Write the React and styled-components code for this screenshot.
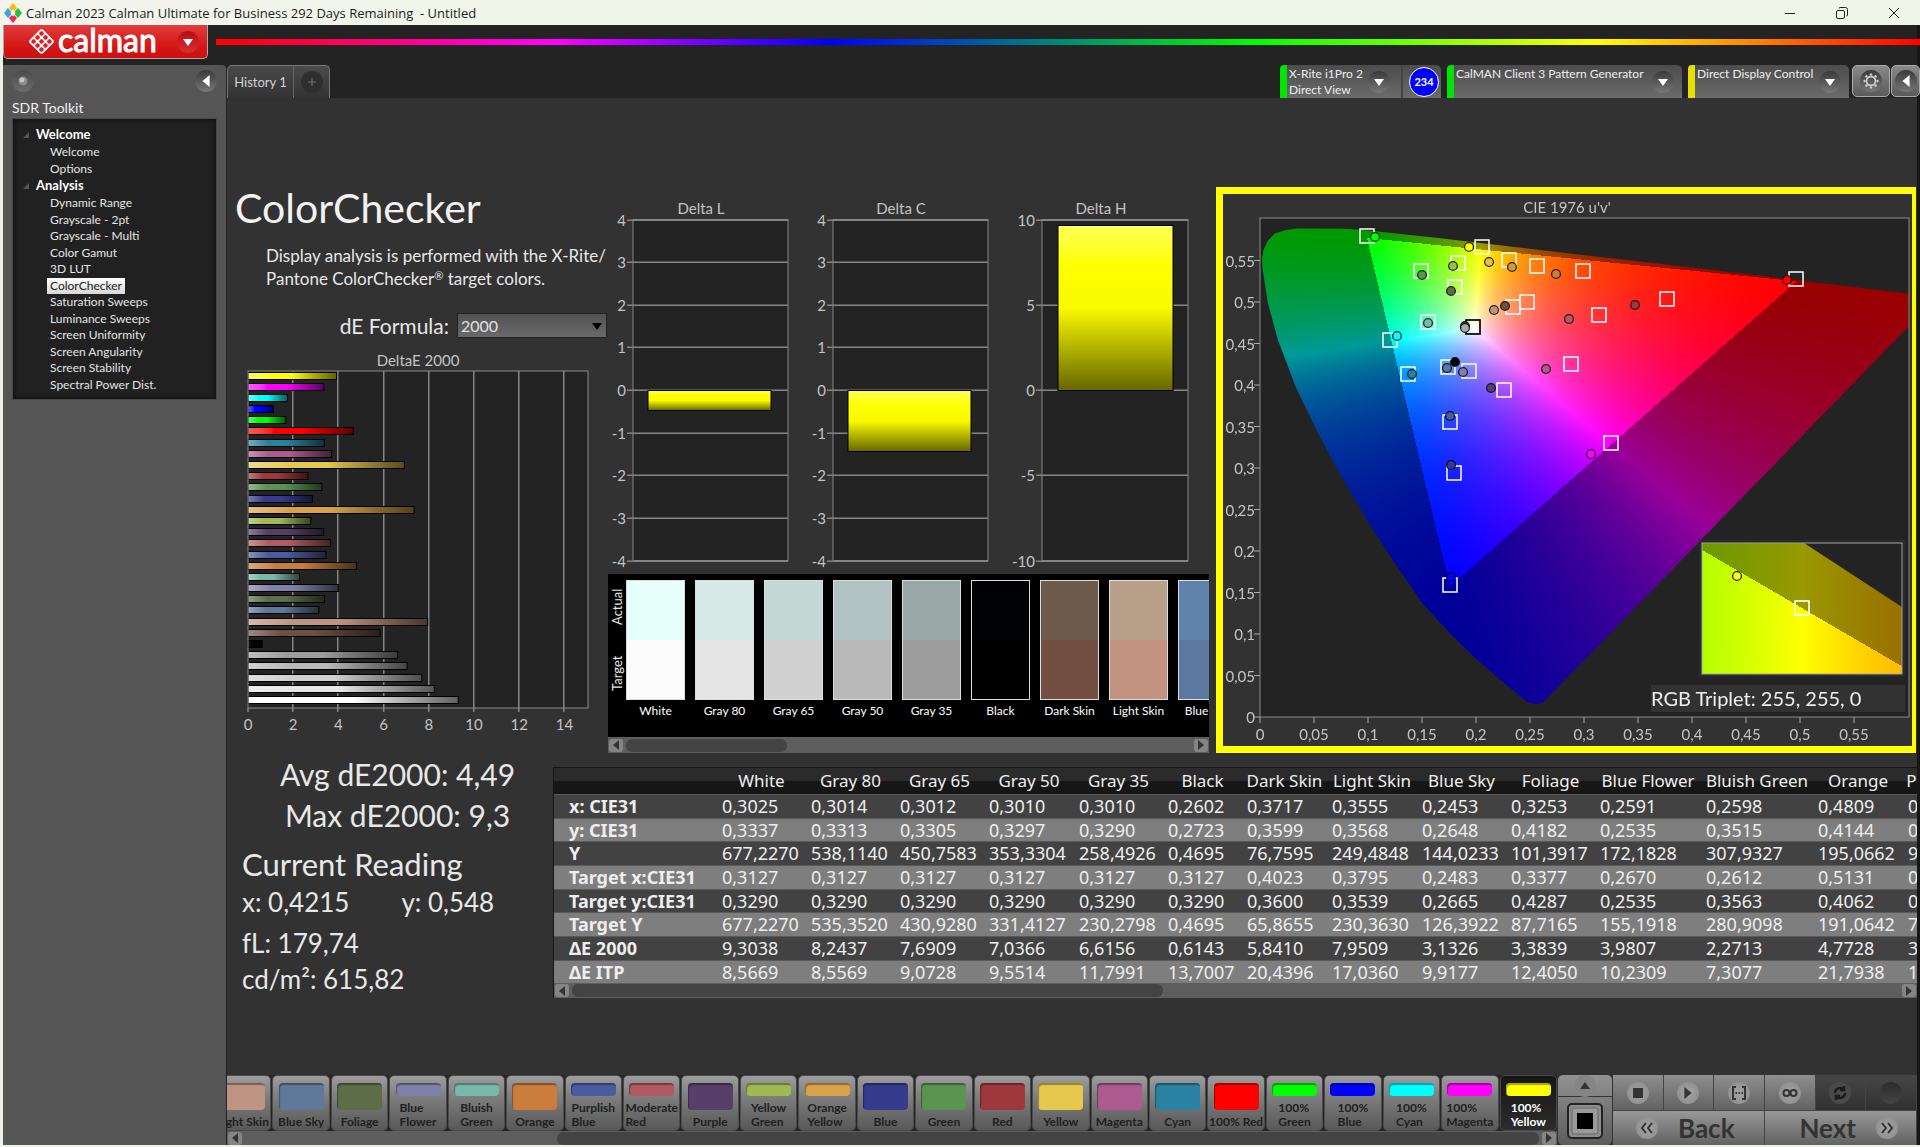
import React, { useLayoutEffect, useRef } from "react";
import styled, { createGlobalStyle, css } from "styled-components";

const Global = createGlobalStyle`
  *, *::before, *::after { box-sizing: border-box; }
  body { margin: 0; background: #eef0ea; font-family: Lato, "Open Sans", sans-serif; color: #e8e8e8; }
  button, select { font-family: inherit; color: inherit; margin: 0; }
  button { padding: 0; border: 0; background: none; }
`;

/* ---------- shell ---------- */

const Window = styled.div`
  display: flex;
  flex-direction: column;
  min-height: 100vh;
  overflow: hidden;
`;

const TitleBar = styled.header`
  display: flex;
  align-items: center;
  height: 25px;
  padding-left: 4px;
  background: linear-gradient(90deg, #f3f4ec, #edf6e6 60%, #f0f5ea);
  color: #1c1c1c;
  font: 13px/20px "Open Sans", "Noto Sans", sans-serif;
  white-space: pre;
  gap: 4px;
`;

const WindowButtons = styled.div`
  display: flex;
  margin-left: auto;
`;

const WindowButton = styled.button`
  display: grid;
  place-items: center;
  width: 52px;
  height: 25px;
`;

const Frame = styled.div`
  display: flex;
  flex-direction: column;
  flex: 1;
  margin: 0 0 2px 3px;
  border-right: 3px solid #161616;
  background: #232323;
`;

const BrandBar = styled.div`
  display: flex;
  height: 40px;
  gap: 8px;
`;

const BrandButton = styled.button`
  display: flex;
  align-items: center;
  width: 205px;
  height: 34px;
  padding: 0 8px 0 24px;
  gap: 3px;
  border: 1px solid #a9a9a9;
  border-width: 0 1px 1px 1px;
  border-radius: 0 0 5px 5px;
  background: linear-gradient(#e23c3c, #d41414 70%, #d01010);
  color: #fff;
`;

const BrandName = styled.span`
  flex: 1;
  text-align: left;
  font: 400 32px/32px Lato, sans-serif;
  -webkit-text-stroke: 1px #fff;
  padding-bottom: 4px;
`;

const Spectrum = styled.div`
  flex: 1;
  height: 6px;
  margin: 14px -3px 0 0;
  background: linear-gradient(90deg, #f00 0%, #f0f 20%, #00f 36%, #0f0 61%, #ff0 81%, #f00 100%);
`;

const Body = styled.div`
  display: flex;
  flex: 1;
  gap: 1px;
`;

/* ---------- round glyph button ---------- */

const Knob = styled.span`
  display: grid;
  place-items: center;
  flex: none;
  width: 22px;
  height: 22px;
  border-radius: 50%;
  background: ${(p) => p.$fill || "linear-gradient(#3a3a3a, #777)"};
`;

/* ---------- sidebar ---------- */

const Sidebar = styled.aside`
  width: 223px;
  padding: 0 9px;
  border-radius: 0 4px 0 0;
  background: #555;
`;

const SidebarTop = styled.div`
  display: flex;
  justify-content: space-between;
  align-items: center;
  height: 32px;
`;

const KnobButton = styled.button`
  display: block;
`;

const ToolkitName = styled.h2`
  margin: 0;
  font: 400 14px/21px Lato, sans-serif;
  color: #f0f0f0;
`;

const Tree = styled.nav`
  height: 282px;
  padding: 7px 0 0 10px;
  background: #212121;
  box-shadow: inset 0 0 6px #0c0c0c;
  border: 1px solid #484848;
`;

const TreeGroup = styled.h3`
  display: flex;
  align-items: center;
  gap: 7px;
  margin: 0;
  font: 700 13px/17px Lato, sans-serif;
  color: #fff;
`;

const TreeList = styled.ul`
  display: grid;
  grid-auto-rows: minmax(0, 1fr);
  height: ${(p) => p.$height}px;
  margin: 0;
  padding: 1px 0 0 24px;
  list-style: none;
  font-size: 12px;
  line-height: 16px;
`;

const TreeLink = styled.a`
  display: inline-block;
  padding: 0 3px;
  text-decoration: none;
  color: #e4e4e4;
  ${(p) => p.$active && css`
    background: linear-gradient(#fff, #d8d8d8);
    color: #222;
  `}
`;

/* ---------- tabs above the workspace ---------- */

const Main = styled.main`
  display: flex;
  flex-direction: column;
  flex: 1;
  min-width: 0;
`;

const TabBar = styled.div`
  display: flex;
  align-items: flex-start;
  height: 33px;
  margin-right: -3px;
`;

const HistoryTabs = styled.div`
  display: flex;
  height: 33px;
  border: 1px solid #777;
  border-bottom: 0;
  border-radius: 5px 5px 0 0;
  background: linear-gradient(#4a4a4a, #333);
  margin-right: auto;
`;

const HistoryTab = styled.button`
  width: 66px;
  border-right: 1px solid #666;
  font-size: 13px;
  color: #d2d2d2;
`;

const AddTab = styled.button`
  display: grid;
  place-items: center;
  width: 35px;
`;

const Device = styled.div`
  display: flex;
  width: ${(p) => p.$width}px;
  height: 33px;
  margin-right: ${(p) => p.$after}px;
  border-left: 7px solid ${(p) => p.$color};
  border-radius: 4px 5px 0 0;
  background: linear-gradient(#4c4c4c, #6b6b6b);
  color: #eee;
  font-size: 12px;
  line-height: 16px;
  white-space: nowrap;
`;

const DeviceName = styled.div`
  flex: 1;
  padding: 1px 0 0 2px;
`;

const DeviceMenu = styled.button`
  align-self: center;
  margin-right: ${(p) => p.$after}px;
`;

const Readout = styled.div`
  display: grid;
  place-items: center;
  width: 40px;
  padding-left: 4px;
  border-left: 2px solid #444;
`;

const Badge = styled.span`
  display: grid;
  place-items: center;
  width: 30px;
  height: 30px;
  border: 1px solid #fff;
  border-radius: 50%;
  background: #00f;
  font: 700 11px/14px Lato, sans-serif;
  color: #fff;
`;

const ToolButton = styled.button`
  display: grid;
  place-items: center;
  width: ${(p) => p.$width}px;
  height: 32px;
  margin-right: ${(p) => p.$after || 0}px;
  border: 1px solid #aaa;
  border-radius: 5px;
  background: linear-gradient(#8a8a8a, #5a5a5a);
`;

/* ---------- workspace ---------- */

const Workspace = styled.section`
  flex: 1;
  padding: 89px 0 0 0;
  background: #323232;
  overflow: hidden;
`;

const TopRow = styled.div`
  display: grid;
  grid-template-columns: 381px 601px minmax(0, 1fr);
  height: 566px;
`;

const Heading = styled.h1`
  margin: 0;
  padding-left: 8px;
  font: 400 41px/42px Lato, sans-serif;
  color: #f2f2f2;
`;

const Description = styled.p`
  margin: 15px 0 23px 39px;
  font-size: 17px;
  line-height: 23px;
  white-space: nowrap;
`;

const Registered = styled.span`
  font-size: 11px;
  line-height: 11px;
  vertical-align: 5px;
`;

const FormulaRow = styled.div`
  display: flex;
  justify-content: flex-end;
  align-items: center;
  gap: 8px;
  margin-bottom: 12px;
  padding-right: 1px;
`;

const FormulaLabel = styled.label`
  font-size: 21px;
  line-height: 25px;
`;

const SelectBox = styled.div`
  display: grid;
  align-items: center;
  > * { grid-area: 1 / 1; }
  > svg { justify-self: end; margin-right: 5px; pointer-events: none; }
`;

const FormulaSelect = styled.select`
  appearance: none;
  width: 150px;
  height: 25px;
  padding: 0 3px;
  border: 1px solid #222;
  border-radius: 0;
  background: linear-gradient(#525252, #6a6a6a);
  font-size: 16px;
  color: #e0e0e0;
`;

const BarChart = styled.svg`
  display: block;
  margin-left: 13px;
  overflow: visible;
  font: 15px Lato, sans-serif;
  fill: #c4c4c4;
`;

const DeltaRow = styled.div`
  display: flex;
  height: 387px;
  margin-left: -7px;
`;

const DeltaChart = styled.svg`
  flex: none;
  font: 15px Lato, sans-serif;
  fill: #c4c4c4;
`;

/* ---------- patch comparison ---------- */

const Patches = styled.div`
  display: flex;
  background: #000;
  height: 163px;
  padding-top: 6px;
  overflow: hidden;
`;

const PatchAxis = styled.div`
  display: flex;
  flex: none;
  justify-content: space-between;
  width: 18px;
  height: 120px;
  padding: 9px 0;
  writing-mode: vertical-rl;
  transform: rotate(180deg);
  font-size: 13px;
  line-height: 18px;
`;

const Patch = styled.figure`
  flex: none;
  width: 59px;
  margin: 0 10px 0 0;
`;

const PatchColors = styled.div`
  height: 120px;
  border: 1px solid #ddd;
  background: linear-gradient(${(p) => p.$actual} 50%, ${(p) => p.$target} 50%);
`;

const PatchName = styled.figcaption`
  display: flex;
  justify-content: center;
  padding-top: 3px;
  font-size: 12px;
  line-height: 16px;
  white-space: nowrap;
  color: #fff;
`;

/* ---------- scroll bar ---------- */

const Track = styled.div`
  display: flex;
  align-items: center;
  height: ${(p) => p.$height}px;
  padding: 0 1px;
  gap: 3px;
  background: #5e5e5e;
`;

const ScrollButton = styled.button`
  display: grid;
  place-items: center;
  flex: none;
  width: 14px;
  height: 13px;
  border-radius: 3px;
  background: #858585;
`;

const ThumbLane = styled.div`
  flex: 1;
  padding-left: ${(p) => p.$offset};
`;

const Thumb = styled.div`
  width: ${(p) => p.$size};
  height: 13px;
  border-radius: 6px;
  background: #444;
`;

/* ---------- chromaticity ---------- */

const CiePanel = styled.div`
  margin: 0 1px 0 7px;
  border: 7px solid #ff0;
  border-right-width: 4px;
  display: grid;
  align-content: start;
  overflow: hidden;
  > * { grid-area: 1 / 1; width: 100%; }
`;

const GamutCanvas = styled.canvas`
  display: block;
  height: auto;
`;

const CieOverlay = styled.svg`
  display: block;
  font: 15px Lato, sans-serif;
  fill: #c4c4c4;
`;

/* ---------- readings and table ---------- */

const BottomRow = styled.div`
  display: grid;
  grid-template-columns: 326px minmax(0, 1fr);
  padding-top: 1px;
`;

const Readings = styled.div`
  padding-left: 15px;
  white-space: nowrap;
`;

const Stat = styled.div`
  text-align: center;
  font-size: 30px;
  line-height: 41px;
`;

const ReadingTitle = styled.h2`
  margin: 8px 0 0;
  font: 400 31px/40px Lato, sans-serif;
`;

const ReadingLine = styled.div`
  display: flex;
  gap: 52px;
  margin-bottom: ${(p) => p.$after || 0}px;
  font-size: 26px;
  line-height: 36px;
`;

const TableBox = styled.div`
  margin-top: 13px;
  border: 1px solid #161616;
  border-width: 1px 0 0 1px;
  overflow: hidden;
`;

const DataTable = styled.table`
  table-layout: fixed;
  width: 1461px;
  border-collapse: collapse;
  font: 18px/20px "Noto Sans", "Open Sans", sans-serif;
  color: #eee;
`;

const HeadRow = styled.tr`
  height: 26px;
  background: linear-gradient(#2b2b2b 50%, #161616 50%);
`;

const HeadCell = styled.th`
  padding: 0;
  font: 400 17px/20px "Noto Sans", "Open Sans", sans-serif;
  white-space: nowrap;
`;

const DataRow = styled.tr`
  height: 24px;
  background: #424242;
  &:nth-child(even) { background: #7e7e7e; }
  &:nth-child(3n + 2) { height: 23px; }
`;

const RowName = styled.th`
  padding: 0 0 0 15px;
  border-top: 1px solid #5a5a5a;
  text-align: left;
  font: 700 18px/20px "Noto Sans", "Open Sans", sans-serif;
`;

const Cell = styled.td`
  padding: 0 0 0 5px;
  border-top: 1px solid #5a5a5a;
`;

/* ---------- bottom toolbar ---------- */

const Footer = styled.footer`
  display: flex;
  height: 70px;
  background: #323232;
`;

const StripArea = styled.div`
  flex: 1;
  min-width: 0;
  overflow: hidden;
`;

const Strip = styled.div`
  display: grid;
  grid-template-columns: repeat(23, minmax(0, 1fr));
  height: 56px;
  margin: 0 -1px 0 -13px;
  background: #262626;
`;

const StripButton = styled.button`
  display: flex;
  flex-direction: column;
  align-items: center;
  margin-right: 1px;
  padding: 7px 0 1px;
  border: 1px solid #4a4a4a;
  border-radius: 5px;
  background: ${(p) => (p.$active ? "linear-gradient(#161616, #2c2c2c)" : "linear-gradient(#9c9c9c, #7d7d7d 40%, #585858)")};
  color: ${(p) => (p.$active ? "#fff" : "#202020")};
  overflow: hidden;
`;

const StripColor = styled.span`
  flex: 1;
  width: 45px;
  border-radius: 4px;
  background: ${(p) => p.$color};
  box-shadow: inset 1px 2px 1px rgba(0, 0, 0, 0.35);
`;

const StripLabel = styled.span`
  padding-top: 5px;
  text-align: left;
  font: 700 12px/14px Lato, sans-serif;
  white-space: pre;
`;

const LevelBox = styled.div`
  display: flex;
  flex-direction: column;
  width: 54px;
  margin: 0 1px;
  border-radius: 5px;
  background: linear-gradient(#929292, #5c5c5c);
`;

const LevelUp = styled.button`
  display: grid;
  place-items: center;
  height: 22px;
  border-bottom: 1px solid #333;
`;

const LevelStop = styled.button`
  display: grid;
  place-items: center;
  flex: 1;
`;

const Transport = styled.div`
  display: grid;
  grid-template-columns: repeat(6, 1fr);
  grid-template-rows: 35px 35px;
  width: 304px;
`;

const TransportButton = styled.button`
  display: grid;
  place-items: center;
  border-right: 1px solid #444;
  background: ${(p) => (p.$off ? "linear-gradient(#474747, #303030)" : "linear-gradient(#8e8e8e, #626262)")};
`;

const StepButton = styled.button`
  display: flex;
  align-items: center;
  justify-content: ${(p) => p.$align};
  gap: 20px;
  grid-column: span 3;
  padding: 0 18px 0 23px;
  border: 1px solid #444;
  border-width: 1px 1px 0 0;
  background: linear-gradient(#989898, #626262);
  font: 700 26px/30px Lato, sans-serif;
  color: #333;
`;

/* ---------- data ---------- */

const comma = (n) => String(Math.round(n * 100) / 100).replace(".", ",");

const DELTA_E = [
  ["#ffff00", 3.92], ["#ff00ff", 3.35], ["#00ffff", 1.75], ["#0000ff", 1.12], ["#00ff00", 1.67],
  ["#ff0000", 4.66], ["#2a82a2", 3.38], ["#ad5a90", 3.7], ["#e6c94c", 6.92], ["#9f383c", 2.65],
  ["#5b9451", 3.27], ["#363b8e", 2.85], ["#d9a248", 7.35], ["#a1b950", 2.78], ["#573f69", 3.35],
  ["#b25a63", 3.65], ["#4b5b9f", 3.45], ["#cb7d3e", 4.8], ["#7ab8a9", 2.28], ["#8180aa", 4],
  ["#5c6d47", 3.38], ["#60799b", 3.13], ["#bf9483", 7.95], ["#6e4f43", 5.84], ["#040404", 0.63],
  ["#9d9d9d", 6.62], ["#b9b9b9", 7.04], ["#d0d0d0", 7.69], ["#e6e6e6", 8.24], ["#ffffff", 9.3],
];

const PATCHES = [
  ["White", "#e7fffa", "#fbfbfb"], ["Gray 80", "#d6e9e6", "#e5e5e5"], ["Gray 65", "#c4d8d5", "#d0d0d0"],
  ["Gray 50", "#b0c2c1", "#b9b9b9"], ["Gray 35", "#99a8a6", "#9d9d9d"], ["Black", "#010203", "#000000"],
  ["Dark Skin", "#6e5a4a", "#734f41"], ["Light Skin", "#b79f8a", "#c29380"], ["Blue Sky", "#5f83aa", "#5b799f"],
];

const STRIP = [
  ["Light Skin", "#bf9483"], ["Blue Sky", "#60799b"], ["Foliage", "#5c6d47"], ["Blue\nFlower", "#8180aa"],
  ["Bluish\nGreen", "#7ab8a9"], ["Orange", "#cb7d3e"], ["Purplish\nBlue", "#4b5b9f"], ["Moderate\nRed", "#b25a63"],
  ["Purple", "#573f69"], ["Yellow\nGreen", "#a1b950"], ["Orange\nYellow", "#d9a248"], ["Blue", "#363b8e"],
  ["Green", "#5b9451"], ["Red", "#9f383c"], ["Yellow", "#e6c94c"], ["Magenta", "#ad5a90"], ["Cyan", "#2a82a2"],
  ["100% Red", "#ff0000"], ["100%\nGreen", "#00ff00"], ["100%\nBlue", "#0000ff"], ["100%\nCyan", "#00ffff"],
  ["100%\nMagenta", "#ff00ff"], ["100%\nYellow", "#ffff00"],
];

const COLUMNS = [
  ["White", 89], ["Gray 80", 89], ["Gray 65", 89], ["Gray 50", 90], ["Gray 35", 89], ["Black", 79],
  ["Dark Skin", 85], ["Light Skin", 90], ["Blue Sky", 89], ["Foliage", 89], ["Blue Flower", 106],
  ["Bluish Green", 112], ["Orange", 90], ["Purplish Blue", 112],
];

const ROWS = [
  ["x: CIE31", "0,3025 0,3014 0,3012 0,3010 0,3010 0,2602 0,3717 0,3555 0,2453 0,3253 0,2591 0,2598 0,4809 0"],
  ["y: CIE31", "0,3337 0,3313 0,3305 0,3297 0,3290 0,2723 0,3599 0,3568 0,2648 0,4182 0,2535 0,3515 0,4144 0"],
  ["Y", "677,2270 538,1140 450,7583 353,3304 258,4926 0,4695 76,7595 249,4848 144,0233 101,3917 172,1828 307,9327 195,0662 9"],
  ["Target x:CIE31", "0,3127 0,3127 0,3127 0,3127 0,3127 0,3127 0,4023 0,3795 0,2483 0,3377 0,2670 0,2612 0,5131 0"],
  ["Target y:CIE31", "0,3290 0,3290 0,3290 0,3290 0,3290 0,3290 0,3600 0,3539 0,2665 0,4287 0,2535 0,3563 0,4062 0"],
  ["Target Y", "677,2270 535,3520 430,9280 331,4127 230,2798 0,4695 65,8655 230,3630 126,3922 87,7165 155,1918 280,9098 191,0642 7"],
  ["ΔE 2000", "9,3038 8,2437 7,6909 7,0366 6,6156 0,6143 5,8410 7,9509 3,1326 3,3839 3,9807 2,2713 4,7728 3"],
  ["ΔE ITP", "8,5669 8,5569 9,0728 9,5514 11,7991 13,7007 20,4396 17,0360 9,9177 12,4050 10,2309 7,3077 21,7938 1"],
];

/* ---------- chromaticity maths (u'v' chart with the P3 gamut) ---------- */

const CIE = { w: 689, h: 552, left: 37, top: 24, right: 686, bottom: 523, sx: 1080, sy: 830 };
const INSET = { x: 479, y: 349, w: 200, h: 131, u: 0.2047, v: 0.5638, cx: 100, cy: 65, sx: 5560, sy: 24700 };
const P3 = [[0.4964, 0.5256], [0.0986, 0.5777], [0.1754, 0.1579]];

const LOCUS = [
  [0.2553, 0.0152], [0.247, 0.0187], [0.2218, 0.0454], [0.1966, 0.0744], [0.1757, 0.1012], [0.1505, 0.1368],
  [0.1212, 0.1925], [0.1002, 0.2349], [0.073, 0.295], [0.052, 0.3463], [0.0331, 0.3975], [0.0163, 0.4555],
  [0.0071, 0.5], [0.0023, 0.541], [0.0019, 0.553], [0.0033, 0.563], [0.007, 0.5735], [0.0137, 0.5825],
  [0.0231, 0.5865], [0.0337, 0.5885], [0.0792, 0.5882], [0.1002, 0.5862], [0.1631, 0.5775], [0.2889, 0.5582],
  [0.4, 0.5415], [0.6234, 0.5065], [0.6234, 0.501], [0.262, 0.0175],
];

const gx = (u) => CIE.left + u * CIE.sx;
const gy = (v) => CIE.bottom - v * CIE.sy;

function side(a, b, u, v) {
  return (b[0] - a[0]) * (v - a[1]) - (b[1] - a[1]) * (u - a[0]);
}

function shade(u, v, gamma) {
  const X = 9 * u;
  const Y = 4 * v;
  const Z = 12 - 3 * u - 20 * v;
  const lin = [
    2.4934969 * X - 0.9313836 * Y - 0.4027108 * Z,
    -0.829489 * X + 1.7626641 * Y + 0.0236247 * Z,
    0.0358458 * X - 0.0761724 * Y + 0.9568845 * Z,
  ].map((c) => Math.max(0, c));
  const peak = Math.max(lin[0], lin[1], lin[2]) || 1;
  const inside = side(P3[0], P3[1], u, v) > 0 && side(P3[1], P3[2], u, v) > 0 && side(P3[2], P3[0], u, v) > 0;
  const dim = inside ? 255 : 153;
  return lin.map((c) => Math.pow(c / peak, gamma) * dim);
}

function field(w, h, gamma, toUV) {
  const layer = document.createElement("canvas");
  layer.width = w;
  layer.height = h;
  const ctx = layer.getContext("2d");
  const img = ctx.createImageData(w, h);
  for (let y = 0; y < h; y++) {
    for (let x = 0; x < w; x++) {
      const [u, v] = toUV(x, y);
      const c = shade(u, v, gamma);
      const i = (y * w + x) * 4;
      img.data[i] = c[0];
      img.data[i + 1] = c[1];
      img.data[i + 2] = c[2];
      img.data[i + 3] = 255;
    }
  }
  ctx.putImageData(img, 0, 0);
  return layer;
}

function clipTo(ctx, points) {
  ctx.beginPath();
  points.forEach(([x, y], i) => (i ? ctx.lineTo(x, y) : ctx.moveTo(x, y)));
  ctx.closePath();
  ctx.clip();
}

function drawGamut(ctx) {
  const w = CIE.right - CIE.left;
  const h = CIE.bottom - CIE.top;
  ctx.fillStyle = "#232323";
  ctx.fillRect(CIE.left, CIE.top, w, h);
  const main = field(w, h, 1.15, (x, y) => [x / CIE.sx, (h - y) / CIE.sy]);
  ctx.save();
  clipTo(ctx, LOCUS.map(([u, v]) => [gx(u), gy(v)]));
  ctx.drawImage(main, CIE.left, CIE.top);
  ctx.restore();

  const { x, y, w: iw, h: ih } = INSET;
  ctx.fillStyle = "#2a2a2a";
  ctx.fillRect(x - 3, y - 3, iw + 6, ih + 6);
  ctx.fillStyle = "#232323";
  ctx.fillRect(x, y, iw, ih);
  const zoomed = field(iw, ih, 1.4, (px, py) => [
    INSET.u + (px - INSET.cx) / INSET.sx,
    INSET.v - (py - INSET.cy) / INSET.sy,
  ]);
  ctx.save();
  clipTo(ctx, [[x, y], [x + 102, y], [x + iw, y + 64], [x + iw, y + ih], [x, y + ih]]);
  ctx.drawImage(zoomed, x, y);
  ctx.restore();
}

const TARGETS = [
  [144, 42], [259, 53], [235, 69], [198, 77], [232, 93], [286, 66], [314, 72], [360, 77], [573, 85], [444, 105],
  [376, 121], [304, 108], [290, 113], [205, 128], [167, 146], [185, 180], [225, 173], [246, 177], [281, 196],
  [348, 170], [227, 228], [231, 279], [388, 249], [227, 391],
];

const SAMPLES = [
  [152, 43, "#00ff00"], [246, 53, "#ffff00"], [230, 72, "#a1b950"], [199, 81, "#5b9451"], [228, 97, "#5c6d47"],
  [266, 68, "#e0c24c"], [289, 73, "#d0993f"], [333, 80, "#cb7d3e"], [564, 86, "#ff0000"], [412, 111, "#9f383c"],
  [346, 125, "#b25a63"], [282, 112, "#6e4f43"], [271, 116, "#bf9483"], [242, 132, "#444444"], [242, 134, "#aaaaaa"],
  [205, 129, "#7ab8a9"], [174, 142, "#00ffff"], [189, 180, "#2a82a2"], [224, 174, "#60799b"], [232, 168, "#000000"],
  [240, 178, "#8180aa"], [268, 194, "#573f69"], [323, 175, "#ad5a90"], [227, 222, "#4b5b9f"], [228, 271, "#363b8e"],
  [368, 260, "#ff00ff"], [228, 383, "#0000ff"],
];

/* ---------- parts ---------- */

const Arrow = ({ dir = "down", size = 6, color = "#fff" }) => {
  const d = {
    down: "M0 2 L10 2 L5 9 Z",
    up: "M0 8 L10 8 L5 1 Z",
    left: "M8 0 L8 10 L2 5 Z",
    right: "M2 0 L2 10 L8 5 Z",
  }[dir];
  return (
    <svg width={size * 2} height={size * 2} viewBox="0 0 10 10" fill={color} aria-hidden="true">
      <path d={d} />
    </svg>
  );
};

const AppIcon = () => (
  <svg width="18" height="20" viewBox="0 0 18 20" aria-hidden="true">
    <path d="M9 0l4 5-4 4-4-4z" fill="#f6b90c" />
    <path d="M4 5l4.500 5-4.500 5-4-5z" fill="#3aa5e6" />
    <path d="M14 5l4 5-4 5-4.500-5z" fill="#25c03b" />
    <path d="M9 11l4 4-4 5-4-5z" fill="#ea2750" />
    <path d="M9 6l2.500 4L9 13.500 6.500 10z" fill="#f3f4ec" />
  </svg>
);

const BrandMark = () => (
  <svg width="27" height="27" viewBox="0 0 27 27" aria-hidden="true">
    <rect x="4" y="4" width="19" height="19" rx="3" transform="rotate(45 13.500 13.500)" fill="#fff" />
    <g transform="rotate(45 13.500 13.500)" fill="#d92323">
      {[0, 1, 2].map((r) => [0, 1, 2].map((c) => (
        <rect key={`${r}${c}`} x={5.8 + c * 5.6} y={5.8 + r * 5.6} width="4.200" height="4.200" rx="1.400" />
      )))}
    </g>
  </svg>
);

const Scroll = ({ height, offset = "0", size, label }) => (
  <Track $height={height} role="group" aria-label={label}>
    <ScrollButton aria-label="Scroll left"><Arrow dir="left" size={5} color="#333" /></ScrollButton>
    <ThumbLane $offset={offset}><Thumb $size={size} /></ThumbLane>
    <ScrollButton aria-label="Scroll right"><Arrow dir="right" size={5} color="#333" /></ScrollButton>
  </Track>
);

const DeltaEChart = () => {
  const x0 = 8;
  const unit = 22.6;
  return (
    <BarChart width="360" height="388" role="img" aria-label="DeltaE 2000">
      <defs>
        {DELTA_E.map(([c], i) => (
          <linearGradient id={`bar${i}`} key={i}>
            <stop offset="0" stopColor={i === 24 ? "#222" : `color-mix(in srgb, ${c} 65%, white)`} />
            <stop offset="0.25" stopColor={c} />
            <stop offset="0.5" stopColor={c} />
            <stop offset="1" stopColor={`color-mix(in srgb, ${c} 38%, black)`} />
          </linearGradient>
        ))}
      </defs>
      <text x="178" y="16" textAnchor="middle">DeltaE 2000</text>
      <rect x={x0} y="21" width="340" height="337" fill="#232323" />
      {[2, 4, 6, 8, 10, 12, 14].map((t) => (
        <rect key={t} x={Math.round(x0 + t * unit) - 1} y="21" width="1.500" height="341" fill="#858585" />
      ))}
      {DELTA_E.map(([, v], i) => (
        <rect key={i} x={x0} y={Math.round(22.5 + i * 11.19) - 0.5} width={v * unit} height="7" fill={`url(#bar${i})`} stroke="#000" />
      ))}
      <rect x={x0} y="21" width="340" height="337" fill="none" stroke="#8a8a8a" />
      {[0, 2, 4, 6, 8, 10, 12, 14].map((t) => (
        <text key={t} x={x0 + t * unit} y="380" textAnchor="middle">{t}</text>
      ))}
      <path d="M8 358v4" stroke="#aaa" />
    </BarChart>
  );
};

const Delta = ({ title, left, right, ticks, max, value, barLeft, barRight }) => {
  const top = 32.5;
  const h = 341;
  const y = (v) => top + ((max - v) / (2 * max)) * h;
  const y1 = Math.round(Math.min(y(0), y(value))) + 0.5;
  const bh = Math.round(Math.abs(y(0) - y(value)));
  const id = `fill-${title.slice(-1)}`;
  return (
    <DeltaChart width="200" height="387" role="img" aria-label={title}>
      <defs>
        <linearGradient id={id} x2="0" y2="1">
          <stop offset="0" stopColor="#ffff5a" />
          <stop offset="0.25" stopColor="#ffff00" />
          <stop offset="0.5" stopColor="#fafa00" />
          <stop offset="1" stopColor="#666600" />
        </linearGradient>
      </defs>
      <text x="100" y="27" textAnchor="middle">{title}</text>
      <rect x={left} y={top} width={right - left} height={h} fill="#232323" />
      {ticks.map((t) => (
        <g key={t}>
          <rect x={left - 6} y={Math.round(y(t)) - 0.5} width={right - left + 6} height="1.500" fill="#858585" />
          <text x={left - 7} y={Math.round(y(t)) + 6} textAnchor="end">{t}</text>
        </g>
      ))}
      <rect x={left} y={top} width={right - left} height={h} fill="none" stroke="#858585" />
      <rect x={barLeft} y={y1} width={barRight - barLeft} height={bh} fill={`url(#${id})`} stroke="#000" />
    </DeltaChart>
  );
};

const CieChart = () => {
  const ref = useRef(null);
  useLayoutEffect(() => {
    const ctx = ref.current.getContext("2d");
    ctx.clearRect(0, 0, CIE.w, CIE.h);
    drawGamut(ctx);
  }, []);
  const steps = Array.from({ length: 12 }, (_, i) => i * 0.05);
  return (
    <CiePanel>
      <GamutCanvas ref={ref} width={CIE.w} height={CIE.h} />
      <CieOverlay viewBox={`0 0 ${CIE.w} ${CIE.h}`} role="img" aria-label="CIE 1976 u'v'">
        <text x="344" y="19" textAnchor="middle">CIE 1976 u'v'</text>
        <rect x={CIE.left} y={CIE.top} width={CIE.right - CIE.left} height={CIE.bottom - CIE.top} fill="none" stroke="#8a8a8a" />
        {steps.map((s) => (
          <g key={s}>
            <path d={`M${gx(s)} 523v6M31 ${gy(s)}h6`} stroke="#aaa" />
            <text x={gx(s)} y="546" textAnchor="middle">{comma(s)}</text>
            <text x="32" y={gy(s) + 6} textAnchor="end">{comma(s)}</text>
          </g>
        ))}
        {TARGETS.map(([x, y], i) => (
          <rect key={i} x={x - 7} y={y - 7} width="14" height="14" fill="none" stroke="#fff" strokeWidth="1.500" />
        ))}
        <rect x="243" y="126" width="14" height="14" fill="none" stroke="#000" strokeWidth="1.700" />
        {SAMPLES.map(([x, y, c], i) => (
          <circle key={i} cx={x} cy={y} r="4.400" fill={c} stroke="#000" strokeOpacity="0.8" strokeWidth="1.300" />
        ))}
        <rect x={INSET.x} y={INSET.y} width={INSET.w} height={INSET.h} fill="none" stroke="#a0a0a0" />
        <circle cx="514" cy="382" r="4.400" fill="#ff0" stroke="#222" strokeWidth="1.300" />
        <rect x="572" y="407" width="14" height="14" fill="none" stroke="#fff" strokeWidth="1.600" />
        <rect x="428" y="491" width="254" height="27" fill="#323232" />
        <text x="428" y="512" fontSize="20" fill="#eeeeee">RGB Triplet: 255, 255, 0</text>
      </CieOverlay>
    </CiePanel>
  );
};

const TreeSection = ({ name, items, height, active }) => (
  <>
    <TreeGroup>
      <svg width="6" height="6" aria-hidden="true"><path d="M6 0v6H0z" fill="#555" /></svg>
      {name}
    </TreeGroup>
    <TreeList $height={height}>
      {items.map((t) => (
        <li key={t}><TreeLink href="#" $active={t === active}>{t}</TreeLink></li>
      ))}
    </TreeList>
  </>
);

const disc = "radial-gradient(circle at 50% 50%, #a4a4a4, #8a8a8a)";

export default function App() {
  return (
    <Window>
      <Global />
      <TitleBar>
        <AppIcon />
        <span>Calman 2023 Calman Ultimate for Business 292 Days Remaining  - Untitled</span>
        <WindowButtons>
          <WindowButton aria-label="Minimize">
            <svg width="10" height="10"><path d="M0 5.500h10" stroke="#222" /></svg>
          </WindowButton>
          <WindowButton aria-label="Restore">
            <svg width="12" height="12" fill="none" stroke="#222"><rect x="0.500" y="3.500" width="8" height="8" rx="1.500" /><path d="M3 1.500q0-1 1-1h5.500q2 0 2 2V8q0 1-1 1" /></svg>
          </WindowButton>
          <WindowButton aria-label="Close">
            <svg width="12" height="12" stroke="#222"><path d="M1 1l10 10M11 1L1 11" /></svg>
          </WindowButton>
        </WindowButtons>
      </TitleBar>
      <Frame>
        <BrandBar>
          <BrandButton aria-label="calman menu">
            <BrandMark />
            <BrandName>calman</BrandName>
            <Knob $fill="linear-gradient(#b80c16, #da3030)"><Arrow size={5} /></Knob>
          </BrandButton>
          <Spectrum />
        </BrandBar>
        <Body>
          <Sidebar>
            <SidebarTop>
              <KnobButton aria-label="Record">
                <Knob $fill="linear-gradient(#4a4a4a, #6c6c6c)">
                  <svg width="10" height="10"><circle cx="5" cy="5" r="4.500" fill="#8a8a8a" /><circle cx="4" cy="4" r="2.500" fill="#c4c4c4" /></svg>
                </Knob>
              </KnobButton>
              <KnobButton aria-label="Collapse"><Knob><Arrow dir="left" /></Knob></KnobButton>
            </SidebarTop>
            <ToolkitName>SDR Toolkit</ToolkitName>
            <Tree>
              <TreeSection name="Welcome" items={["Welcome", "Options"]} height={34} />
              <TreeSection
                name="Analysis"
                height={199}
                active="ColorChecker"
                items={["Dynamic Range", "Grayscale - 2pt", "Grayscale - Multi", "Color Gamut", "3D LUT", "ColorChecker",
                  "Saturation Sweeps", "Luminance Sweeps", "Screen Uniformity", "Screen Angularity", "Screen Stability",
                  "Spectral Power Dist."]}
              />
            </Tree>
          </Sidebar>
          <Main>
            <TabBar>
              <HistoryTabs>
                <HistoryTab>History 1</HistoryTab>
                <AddTab aria-label="Add history">
                  <Knob $fill="#2e2e2e">
                    <svg width="8" height="8"><path d="M4 0v8M0 4h8" stroke="#777" /></svg>
                  </Knob>
                </AddTab>
              </HistoryTabs>
              <Device $width={161} $color="#00e400" $after={6}>
                <DeviceName>X-Rite i1Pro 2<br />Direct View</DeviceName>
                <DeviceMenu $after={11} aria-label="Meter menu"><Knob><Arrow size={5} /></Knob></DeviceMenu>
                <Readout><Badge>234</Badge></Readout>
              </Device>
              <Device $width={235} $color="#00e400" $after={6}>
                <DeviceName>CalMAN Client 3 Pattern Generator</DeviceName>
                <DeviceMenu $after={8} aria-label="Source menu"><Knob><Arrow size={5} /></Knob></DeviceMenu>
              </Device>
              <Device $width={161} $color="#e6e000" $after={3}>
                <DeviceName>Direct Display Control</DeviceName>
                <DeviceMenu $after={8} aria-label="Display menu"><Knob><Arrow size={5} /></Knob></DeviceMenu>
              </Device>
              <ToolButton $width={38} $after={1} aria-label="Settings">
                <Knob>
                  <svg width="18" height="18" viewBox="-9 -9 18 18" fill="none" stroke="#ccc">
                    <circle r="4.500" strokeWidth="1.800" />
                    {[0, 45, 90, 135, 180, 225, 270, 315].map((a) => (
                      <path key={a} d="M0-5.500V-7.500" strokeWidth="2.400" transform={`rotate(${a})`} />
                    ))}
                  </svg>
                </Knob>
              </ToolButton>
              <ToolButton $width={29} aria-label="Expand"><Knob><Arrow dir="left" /></Knob></ToolButton>
            </TabBar>

            <Workspace>
              <TopRow>
                <div>
                  <Heading>ColorChecker</Heading>
                  <Description>
                    Display analysis is performed with the X-Rite/<br />
                    Pantone ColorChecker<Registered>®</Registered> target colors.
                  </Description>
                  <FormulaRow>
                    <FormulaLabel htmlFor="formula">dE Formula:</FormulaLabel>
                    <SelectBox>
                      <FormulaSelect id="formula" defaultValue="2000"><option>2000</option></FormulaSelect>
                      <Arrow size={5} color="#000" />
                    </SelectBox>
                  </FormulaRow>
                  <DeltaEChart />
                </div>
                <div>
                  <DeltaRow>
                    <Delta title="Delta L" left={32} right={187} ticks={[4, 3, 2, 1, 0, -1, -2, -3, -4]} max={4} value={-0.48} barLeft={47} barRight={170} />
                    <Delta title="Delta C" left={32} right={187} ticks={[4, 3, 2, 1, 0, -1, -2, -3, -4]} max={4} value={-1.42} barLeft={47} barRight={170} />
                    <Delta title="Delta H" left={41} right={187} ticks={[10, 5, 0, -5, -10]} max={10} value={9.65} barLeft={57} barRight={172} />
                  </DeltaRow>
                  <Patches>
                    <PatchAxis><span>Target</span><span>Actual</span></PatchAxis>
                    {PATCHES.map(([name, actual, target]) => (
                      <Patch key={name}>
                        <PatchColors $actual={actual} $target={target} />
                        <PatchName>{name}</PatchName>
                      </Patch>
                    ))}
                  </Patches>
                  <Scroll height={16} size="161px" label="Patch scroll" />
                </div>
                <CieChart />
              </TopRow>

              <BottomRow>
                <Readings>
                  <Stat>Avg dE2000: 4,49</Stat>
                  <Stat>Max dE2000: 9,3</Stat>
                  <ReadingTitle>Current Reading</ReadingTitle>
                  <ReadingLine $after={5}><span>x: 0,4215</span><span>y: 0,548</span></ReadingLine>
                  <ReadingLine>fL: 179,74</ReadingLine>
                  <ReadingLine>cd/m²: 615,82</ReadingLine>
                </Readings>
                <TableBox>
                  <DataTable>
                    <colgroup>
                      <col width="163" />
                      {COLUMNS.map(([name, w]) => <col key={name} width={w} />)}
                    </colgroup>
                    <thead>
                      <HeadRow>
                        <HeadCell aria-label="Measure" />
                        {COLUMNS.map(([name]) => <HeadCell key={name} scope="col">{name}</HeadCell>)}
                      </HeadRow>
                    </thead>
                    <tbody>
                      {ROWS.map(([name, values]) => (
                        <DataRow key={name}>
                          <RowName scope="row">{name}</RowName>
                          {values.split(" ").map((v, i) => <Cell key={i}>{v}</Cell>)}
                        </DataRow>
                      ))}
                    </tbody>
                  </DataTable>
                  <Scroll height={15} size="591px" label="Table scroll" />
                </TableBox>
              </BottomRow>
            </Workspace>

            <Footer>
              <StripArea>
                <Strip>
                  {STRIP.map(([name, color]) => (
                    <StripButton key={name} $active={name === "100%\nYellow"}>
                      <StripColor $color={color} />
                      <StripLabel>{name}</StripLabel>
                    </StripButton>
                  ))}
                </Strip>
                <Scroll height={14} offset="312px" size="100%" label="Color scroll" />
              </StripArea>
              <LevelBox>
                <LevelUp aria-label="More"><Knob $fill="#858585"><Arrow dir="up" size={5} color="#333" /></Knob></LevelUp>
                <LevelStop aria-label="Pattern window">
                  <svg width="36" height="36">
                    <rect x="1" y="1" width="34" height="34" rx="4" fill="#8d8d8d" stroke="#222" strokeWidth="2" />
                    <rect x="5" y="5" width="26" height="26" rx="2" fill="#9a9a9a" stroke="#666" />
                    <rect x="10" y="10" width="16" height="16" fill="#000" />
                  </svg>
                </LevelStop>
              </LevelBox>
              <Transport>
                <TransportButton aria-label="Stop"><Knob $fill={disc}><svg width="10" height="10"><rect width="10" height="10" fill="#333" /></svg></Knob></TransportButton>
                <TransportButton aria-label="Play"><Knob $fill={disc}><Arrow dir="right" color="#333" /></Knob></TransportButton>
                <TransportButton aria-label="Read series">
                  <Knob $fill={disc}>
                    <svg width="16" height="14" fill="none" stroke="#333" strokeWidth="2"><path d="M5 1H2v12h3M11 1h3v12h-3M4.500 7h1.500M7.500 7h1.500M10.500 7h1.500" /></svg>
                  </Knob>
                </TransportButton>
                <TransportButton aria-label="Read continuous">
                  <Knob $fill={disc}>
                    <svg width="16" height="10" fill="none" stroke="#333" strokeWidth="2"><circle cx="4.500" cy="5" r="3" /><circle cx="11.500" cy="5" r="3" /></svg>
                  </Knob>
                </TransportButton>
                <TransportButton $off aria-label="Refresh">
                  <Knob $fill="#4a4a4a">
                    <svg width="14" height="14" fill="none" stroke="#1c1c1c" strokeWidth="2.500"><path d="M2 7a5 5 0 0 1 8.500-3.500M12 7a5 5 0 0 1-8.500 3.500M11 0v4H7M3 14v-4h4" /></svg>
                  </Knob>
                </TransportButton>
                <TransportButton $off aria-label="Idle"><Knob $fill="linear-gradient(#2c2c2c, #444)" /></TransportButton>
                <StepButton $align="flex-start">
                  <Knob $fill={disc}><svg width="14" height="12" fill="none" stroke="#333" strokeWidth="2"><path d="M6 1L2 6l4 5M12 1L8 6l4 5" /></svg></Knob>
                  Back
                </StepButton>
                <StepButton $align="flex-end">
                  Next
                  <Knob $fill={disc}><svg width="14" height="12" fill="none" stroke="#333" strokeWidth="2"><path d="M2 1l4 5-4 5M8 1l4 5-4 5" /></svg></Knob>
                </StepButton>
              </Transport>
            </Footer>
          </Main>
        </Body>
      </Frame>
    </Window>
  );
}
